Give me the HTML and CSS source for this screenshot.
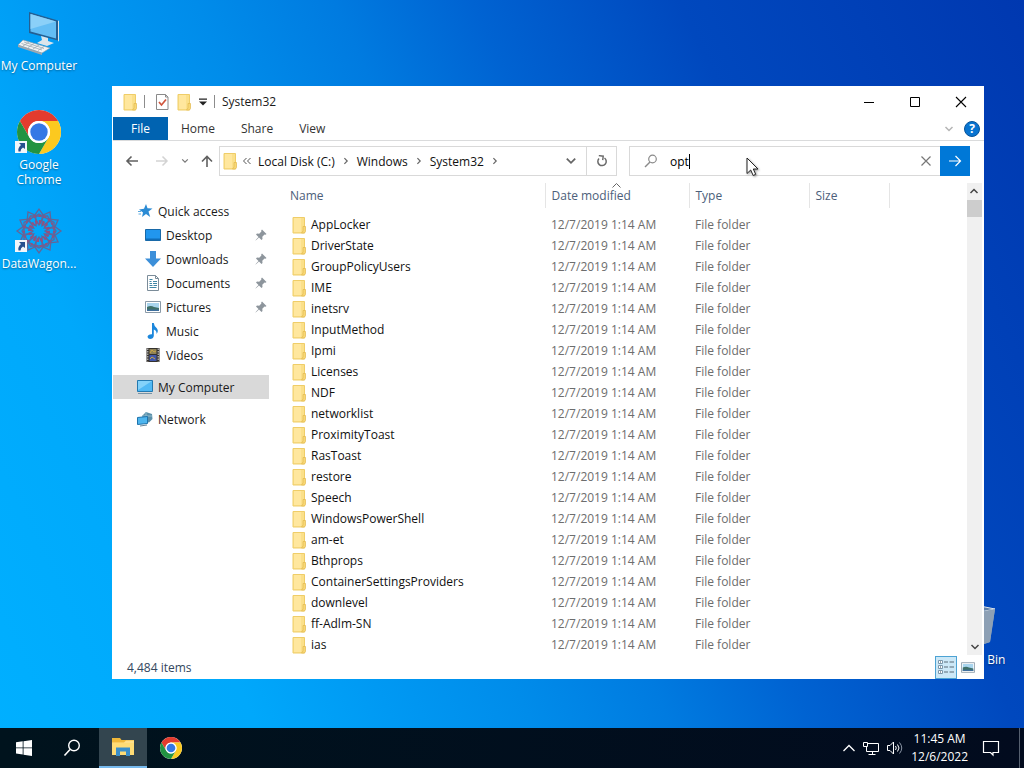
FILE: index.html
```html
<!DOCTYPE html>
<html lang="en">

<head>
    <meta charset="UTF-8">
    <meta name="viewport" content="width=device-width, initial-scale=1">
    <title>System32</title>
    <link rel="stylesheet" href="styles.css">
</head>

<body>
<svg class="sprite" aria-hidden="true">
    <symbol id="folder" viewBox="0 0 14 18">
        <path d="M1 1.500h11.500v15.500H1z" fill="#fbe08a" stroke="#efcd68" />
        <path d="M2 2h7v14H2z" fill="#ffe79e" />
        <path d="M11 10.500h2.500v5l-1 1.500H9.500l1.500-2z" fill="#f8d775" stroke="#e3b94e" stroke-width=".7" />
    </symbol>
    <symbol id="pin" viewBox="0 0 12 12">
        <path d="M7 .5l4.500 4.500-1 .8-1-.2-2.200 2.200.2 2.200-1 1L4 8.500.7 11.500.5 11.300 3.500 8 1 5.500l1-1 2.200.2L6.400 2.500l-.2-1z" fill="#8d959c" />
    </symbol>
    <symbol id="chrome" viewBox="0 0 48 48">
        <circle cx="24" cy="24" r="22" fill="#fff" />
        <path d="M4.950 13A22 22 0 0 1 43.050 13H24A11 11 0 0 0 14.470 29.500z" fill="#e33b2e" />
        <path d="M43.050 13A22 22 0 0 1 24 46L33.530 29.500A11 11 0 0 0 24 13z" fill="#fcc91f" />
        <path d="M24 46A22 22 0 0 1 4.950 13L14.470 29.500A11 11 0 0 0 33.530 29.500z" fill="#229342" />
        <circle cx="24" cy="24" r="11" fill="#fff" />
        <circle cx="24" cy="24" r="8.700" fill="#3578e5" />
    </symbol>
    <symbol id="shortcut" viewBox="0 0 12 12">
        <path d="M0 0h12v12H0z" fill="#f3f6fa" />
        <path d="M4 2h6v6L8 6.500Q5.500 8 5.500 10.500H3.500Q2.500 7 6 4z" fill="#27508f" />
    </symbol>
    <symbol id="picture" viewBox="0 0 16 12">
        <path d="M.5.5h15v11H.5z" fill="#fff" stroke="#8a9aa8" />
        <path d="M2 2h12v8H2z" fill="#a9d5ee" />
        <path d="M2 6q4-2 7 0l5 1v3H2z" fill="#3f7068" />
        <path d="M2 8.500h12V10H2z" fill="#3f6f9d" />
    </symbol>
    <symbol id="chevron" viewBox="0 0 10 10">
        <path d="M1.500 3l3.500 3.500L8.500 3" fill="none" stroke="currentColor" stroke-width="1.500" />
    </symbol>
</svg>

<main class="desktop">
    <nav class="shortcuts" aria-label="Desktop">
        <a class="shortcut" href="#">
            <svg class="shortcut__icon" viewBox="0 0 48 48">
                <path d="M14 3l29 8.500v20L14 24z" fill="#245f92" />
                <path d="M15.500 5L41 12.500v17L15.500 22.500z" fill="#63bdf4" />
                <path d="M15.500 5L41 12.500 15.500 20z" fill="#8bd0f8" />
                <path d="M43 11.500l1 .5v20l-1 .5z" fill="#d6e2ea" />
                <path d="M26 27l7 2v3l6 2-7 3-10-3 5-3z" fill="#dce5eb" />
                <path d="M8 31l27 8-8 5L3 36z" fill="#f1f3f4" stroke="#8f9ba4" stroke-width=".6" />
                <path d="M3 36l24 8v2L3 38z" fill="#9da8b0" />
                <path d="M9 33l20 6.500M6.500 34.500L27 41M14 33l-6 4M19 34.500l-6 4M24 36l-6 4M29 37.500L23 41.500" stroke="#a0abb3" stroke-width=".8" />
            </svg>
            <span>My Computer</span>
        </a>
        <a class="shortcut" href="#">
            <svg class="shortcut__icon" viewBox="0 0 48 48">
                <use href="#chrome" />
                <use href="#shortcut" x="0" y="33" width="12" height="12" />
            </svg>
            <span>Google Chrome</span>
        </a>
        <a class="shortcut" href="#">
            <svg class="shortcut__icon" viewBox="0 0 48 48">
                <g fill="none" stroke="#626699" stroke-width="1.300">
                    <path id="petals" d="M24 18L19 9l5-7 5 7zM24 30l-5 9 5 7 5-7zM18 24l-9-5-7 5 7 5zM30 24l9-5 7 5-7 5z" />
                    <use href="#petals" transform="rotate(30 24 24)" />
                    <use href="#petals" transform="rotate(60 24 24)" />
                    <path d="M24 7l15 8.500v17L24 41 9 32.500v-17z" />
                    <path d="M7 24l8.500-15h17L41 24l-8.500 15h-17z" />
                </g>
                <circle cx="24" cy="24" r="9" fill="none" stroke="#94507f" stroke-width="4" stroke-dasharray="2 1.500" />
                <circle cx="24" cy="24" r="15" fill="none" stroke="#94507f" stroke-width="2" stroke-dasharray="2 3" />
                <use href="#shortcut" x="0" y="33" width="12" height="12" />
            </svg>
            <span>DataWagon...</span>
        </a>
    </nav>
    <a class="shortcut shortcut--bin" href="#">
        <svg class="shortcut__icon" viewBox="0 0 48 48">
            <path d="M5 5l20-3 20 4-5 33-15 5-15-5z" fill="#8fa6bf" />
            <path d="M5 5l20-3 20 4-20 4z" fill="#5d7ea8" stroke="#d9e3ec" />
            <path d="M25 10l20-4-5 33-15 5z" fill="#8da0b5" />
        </svg>
        <span>Recycle Bin</span>
    </a>

    <section class="window">
        <header class="titlebar">
            <svg class="folder"><use href="#folder" /></svg>
            <span class="titlebar__line"></span>
            <button class="plain titlebar__props" aria-label="Properties">
                <svg width="14" height="18" viewBox="0 0 14 18">
                    <path d="M1.500 1.500h9l2.500 2.500v12.500H1.500z" fill="#fff" stroke="#8a8a8a" />
                    <path d="M10.500 1.500V4H13" fill="none" stroke="#8a8a8a" />
                    <path d="M4 9l2.500 3L11 6.500" fill="none" stroke="#d0553d" stroke-width="1.700" />
                </svg>
            </button>
            <button class="plain" aria-label="New folder"><svg class="folder"><use href="#folder" /></svg></button>
            <button class="plain titlebar__more" aria-label="Customize toolbar">
                <svg width="8" height="8" viewBox="0 0 8 8"><path d="M0 .5h8v1.200H0zM0 3.500h8L4 7.500z" fill="#222" /></svg>
            </button>
            <span class="titlebar__line"></span>
            <h1 class="titlebar__text">System32</h1>
            <div class="titlebar__controls">
                <button class="plain" aria-label="Minimize">
                    <svg width="12" height="12" viewBox="0 0 12 12"><path d="M1 6.500h10" stroke="#000" /></svg>
                </button>
                <button class="plain" aria-label="Maximize">
                    <svg width="12" height="12" viewBox="0 0 12 12"><path d="M1.500 1.500h9v9h-9z" fill="none" stroke="#000" /></svg>
                </button>
                <button class="plain" aria-label="Close">
                    <svg width="12" height="12" viewBox="0 0 12 12"><path d="M1 1l10 10M11 1L1 11" stroke="#000" stroke-width="1.100" /></svg>
                </button>
            </div>
        </header>

        <div class="ribbon">
            <button class="ribbon__tab ribbon__tab--file">File</button>
            <button class="ribbon__tab">Home</button>
            <button class="ribbon__tab">Share</button>
            <button class="ribbon__tab">View</button>
            <div class="ribbon__right">
                <button class="plain ribbon__expand" aria-label="Expand ribbon"><svg width="10" height="10"><use href="#chevron" /></svg></button>
                <button class="ribbon__help" aria-label="Help">?</button>
            </div>
        </div>

        <div class="toolbar">
            <div class="history">
                <button class="plain" aria-label="Back">
                    <svg width="14" height="12" viewBox="0 0 14 12"><path d="M13 6H2M6.500 1.500L2 6l4.500 4.500" fill="none" stroke="#606060" stroke-width="1.600" /></svg>
                </button>
                <button class="plain" aria-label="Forward">
                    <svg width="14" height="12" viewBox="0 0 14 12"><path d="M1 6h11M7.500 1.500L12 6l-4.500 4.500" fill="none" stroke="#d3d3d3" stroke-width="1.500" /></svg>
                </button>
                <button class="plain history__recent" aria-label="Recent locations"><svg width="8" height="8"><use href="#chevron" /></svg></button>
                <button class="plain" aria-label="Up">
                    <svg width="12" height="14" viewBox="0 0 12 14"><path d="M6 13V2.500M1 7.500l5-5 5 5" fill="none" stroke="#606060" stroke-width="1.600" /></svg>
                </button>
            </div>
            <div class="address">
                <svg class="folder"><use href="#folder" /></svg>
                <svg class="address__up" width="8" height="8" viewBox="0 0 8 8"><path d="M3.500 1l-3 3 3 3M7.500 1l-3 3 3 3" fill="none" stroke="#555" /></svg>
                <a href="#">Local Disk (C:)</a>
                <svg class="address__sep" width="8" height="8"><use href="#chevron" /></svg>
                <a href="#">Windows</a>
                <svg class="address__sep" width="8" height="8"><use href="#chevron" /></svg>
                <a href="#">System32</a>
                <svg class="address__sep" width="8" height="8"><use href="#chevron" /></svg>
                <button class="plain address__list" aria-label="Previous locations"><svg width="12" height="12"><use href="#chevron" /></svg></button>
                <button class="plain address__refresh" aria-label="Refresh">
                    <svg width="12" height="12" viewBox="0 0 12 12"><path d="M8.500 3A4.200 4.200 0 1 1 3 3.500" fill="none" stroke="#6a6a6a" stroke-width="1.500" /><path d="M2.500 1.200H7v4" fill="none" stroke="#6a6a6a" stroke-width="1.400" transform="rotate(8 7 3)" /></svg>
                </button>
            </div>
            <div class="search">
                <svg class="search__icon" width="14" height="14" viewBox="0 0 14 14"><circle cx="8.500" cy="5" r="3.800" fill="none" stroke="#8a8a8a" stroke-width="1.200" /><path d="M6 8L1 13" stroke="#8a8a8a" stroke-width="1.400" /></svg>
                <input class="search__input" type="text" value="opt" aria-label="Search System32">
                <span class="search__caret"></span>
                <button class="plain search__clear" aria-label="Clear">
                    <svg width="10" height="10" viewBox="0 0 10 10"><path d="M.5.5l9 9M9.500.5l-9 9" stroke="#777" stroke-width="1.200" /></svg>
                </button>
                <button class="plain search__go" aria-label="Search">
                    <svg width="14" height="12" viewBox="0 0 14 12"><path d="M1 6h11.500M7.500 1l5 5-5 5" fill="none" stroke="#fff" stroke-width="1.200" /></svg>
                </button>
            </div>
        </div>

        <div class="content">
            <nav class="places" aria-label="Places">
                <a class="place place--root" href="#">
                    <svg viewBox="0 0 16 16"><path d="M9 1l1.500 4.300 5 .2-4 3 1.700 5.500L9 11l-4 3 1-4.500L2 6.500l5-.8z" fill="#2b8bd4" /><path d="M1 8.500h3M1.500 11h2.500" stroke="#5aa9df" /></svg>
                    Quick access
                </a>
                <a class="place" href="#">
                    <svg viewBox="0 0 16 16"><path d="M.5 2.500h15v11H.5z" fill="#2196ee" stroke="#1869a8" /><path d="M1 11.500h14v1.500H1z" fill="#106db8" /></svg>
                    Desktop
                    <svg class="place__pin"><use href="#pin" /></svg>
                </a>
                <a class="place" href="#">
                    <svg viewBox="0 0 16 16"><path d="M5 0h6v7.500h5L8 16 0 7.500h5z" fill="#3c8fd9" /></svg>
                    Downloads
                    <svg class="place__pin"><use href="#pin" /></svg>
                </a>
                <a class="place" href="#">
                    <svg viewBox="0 0 16 16"><path d="M2.500.5h8l3 3v12h-11z" fill="#fff" stroke="#7b8c99" /><path d="M10.500.5v3h3" fill="none" stroke="#7b8c99" /><path d="M4.500 4.500h3M4.500 6.500h2M8 6.500h4M4.500 8.500h2.500M8 8.500h4M4.500 10.500h3M8.500 10.500h3.500M4.500 12.500h7" stroke="#3f87a6" /></svg>
                    Documents
                    <svg class="place__pin"><use href="#pin" /></svg>
                </a>
                <a class="place" href="#">
                    <svg viewBox="0 0 16 16"><use href="#picture" y="2" width="16" height="12" /></svg>
                    Pictures
                    <svg class="place__pin"><use href="#pin" /></svg>
                </a>
                <a class="place" href="#">
                    <svg viewBox="0 0 16 16"><path d="M7 0h1.800q.2 3 3 5.200Q14 8 11.500 11q.5-3.500-2.700-4.500V13q-.5 3-3.800 3-2.500-.3-2.500-2.300Q3 11 7 11.200z" fill="#1c87dc" /></svg>
                    Music
                </a>
                <a class="place" href="#">
                    <svg viewBox="0 0 16 16"><path d="M1.500 1h13v14h-13z" fill="#34312d" /><path d="M2.800 1.500v13M13.200 1.500v13" stroke="#ddd" stroke-dasharray="1.500 1" /><path d="M4.500 2h7v5h-7z" fill="#8f8256" /><path d="M4.500 8h7v6h-7z" fill="#4157aa" /><path d="M5 6l2-3 2 2 2-1M5 12l2-2 3 2" fill="none" stroke="#c9a644" /></svg>
                    Videos
                </a>
                <a class="place place--root place--gap place--selected" href="#">
                    <svg viewBox="0 0 16 16"><path d="M.5 1.500h15v11H.5z" fill="#50b9f5" stroke="#2379b0" /><path d="M1 2h14L1 11z" fill="#84d2fa" /><path d="M1 14.500h14" stroke="#7793a6" /></svg>
                    My Computer
                </a>
                <a class="place place--root place--gap" href="#">
                    <svg viewBox="0 0 16 16"><path d="M5 5l4-4 6 2 .5 5-3.500 3.500L7 10z" fill="#5c90a9" /><path d="M9 1v8M5 5h10" stroke="#91bdcf" /><path d="M.5 6.500l10-1v7l-10 1z" fill="#4db5ee" stroke="#1e73ac" /><path d="M3 15l7-1" stroke="#63859a" /></svg>
                    Network
                </a>
            </nav>

            <div class="listing">
                <table class="files">
                    <thead>
                        <tr>
                            <th class="files__name">Name</th>
                            <th class="files__date">Date modified<svg class="files__sort" width="9" height="5" viewBox="0 0 9 5"><path d="M.5 4.500l4-4 4 4" fill="none" stroke="#666" /></svg></th>
                            <th class="files__type">Type</th>
                            <th class="files__size">Size</th>
                            <th class="files__rest"></th>
                        </tr>
                    </thead>
                    <tbody>
                        <tr><td><svg class="folder"><use href="#folder" /></svg>AppLocker</td><td>12/7/2019 1:14 AM</td><td>File folder</td><td></td><td></td></tr>
                        <tr><td><svg class="folder"><use href="#folder" /></svg>DriverState</td><td>12/7/2019 1:14 AM</td><td>File folder</td><td></td><td></td></tr>
                        <tr><td><svg class="folder"><use href="#folder" /></svg>GroupPolicyUsers</td><td>12/7/2019 1:14 AM</td><td>File folder</td><td></td><td></td></tr>
                        <tr><td><svg class="folder"><use href="#folder" /></svg>IME</td><td>12/7/2019 1:14 AM</td><td>File folder</td><td></td><td></td></tr>
                        <tr><td><svg class="folder"><use href="#folder" /></svg>inetsrv</td><td>12/7/2019 1:14 AM</td><td>File folder</td><td></td><td></td></tr>
                        <tr><td><svg class="folder"><use href="#folder" /></svg>InputMethod</td><td>12/7/2019 1:14 AM</td><td>File folder</td><td></td><td></td></tr>
                        <tr><td><svg class="folder"><use href="#folder" /></svg>Ipmi</td><td>12/7/2019 1:14 AM</td><td>File folder</td><td></td><td></td></tr>
                        <tr><td><svg class="folder"><use href="#folder" /></svg>Licenses</td><td>12/7/2019 1:14 AM</td><td>File folder</td><td></td><td></td></tr>
                        <tr><td><svg class="folder"><use href="#folder" /></svg>NDF</td><td>12/7/2019 1:14 AM</td><td>File folder</td><td></td><td></td></tr>
                        <tr><td><svg class="folder"><use href="#folder" /></svg>networklist</td><td>12/7/2019 1:14 AM</td><td>File folder</td><td></td><td></td></tr>
                        <tr><td><svg class="folder"><use href="#folder" /></svg>ProximityToast</td><td>12/7/2019 1:14 AM</td><td>File folder</td><td></td><td></td></tr>
                        <tr><td><svg class="folder"><use href="#folder" /></svg>RasToast</td><td>12/7/2019 1:14 AM</td><td>File folder</td><td></td><td></td></tr>
                        <tr><td><svg class="folder"><use href="#folder" /></svg>restore</td><td>12/7/2019 1:14 AM</td><td>File folder</td><td></td><td></td></tr>
                        <tr><td><svg class="folder"><use href="#folder" /></svg>Speech</td><td>12/7/2019 1:14 AM</td><td>File folder</td><td></td><td></td></tr>
                        <tr><td><svg class="folder"><use href="#folder" /></svg>WindowsPowerShell</td><td>12/7/2019 1:14 AM</td><td>File folder</td><td></td><td></td></tr>
                        <tr><td><svg class="folder"><use href="#folder" /></svg>am-et</td><td>12/7/2019 1:14 AM</td><td>File folder</td><td></td><td></td></tr>
                        <tr><td><svg class="folder"><use href="#folder" /></svg>Bthprops</td><td>12/7/2019 1:14 AM</td><td>File folder</td><td></td><td></td></tr>
                        <tr><td><svg class="folder"><use href="#folder" /></svg>ContainerSettingsProviders</td><td>12/7/2019 1:14 AM</td><td>File folder</td><td></td><td></td></tr>
                        <tr><td><svg class="folder"><use href="#folder" /></svg>downlevel</td><td>12/7/2019 1:14 AM</td><td>File folder</td><td></td><td></td></tr>
                        <tr><td><svg class="folder"><use href="#folder" /></svg>ff-Adlm-SN</td><td>12/7/2019 1:14 AM</td><td>File folder</td><td></td><td></td></tr>
                        <tr><td><svg class="folder"><use href="#folder" /></svg>ias</td><td>12/7/2019 1:14 AM</td><td>File folder</td><td></td><td></td></tr>
                    </tbody>
                </table>
            </div>
            <div class="scrollbar">
                <button class="plain scrollbar__up" aria-label="Scroll up"><svg width="10" height="10"><use href="#chevron" /></svg></button>
                <div class="scrollbar__thumb"></div>
                <button class="plain scrollbar__down" aria-label="Scroll down"><svg width="10" height="10"><use href="#chevron" /></svg></button>
            </div>
        </div>

        <footer class="status">
            <span>4,484 items</span>
            <div class="status__views">
                <button class="plain status__view status__view--active" aria-label="Details">
                    <svg width="16" height="14" viewBox="0 0 16 14"><path d="M.5.5h4v3h-4zM.5 5.500h4v3h-4zM.5 10.500h4v3h-4z" fill="#fff" stroke="#7c98ac" /><path d="M2 2h1M2 7h1M2 12h1" stroke="#345" /><path d="M6 2h4M11.500 2H16M6 7h4M11.500 7H16M6 12h4M11.500 12H16" stroke="#5b6b76" /></svg>
                </button>
                <button class="plain status__view" aria-label="Large icons"><svg width="14" height="11"><use href="#picture" /></svg></button>
            </div>
        </footer>
    </section>

    <svg class="pointer" width="14" height="20" viewBox="0 0 14 20">
        <path d="M1 1v15.500l3.700-3.500 2.500 5.500 2.500-1.200L7.300 12H12z" fill="#fff" stroke="#222" />
    </svg>
</main>

<footer class="taskbar">
    <button class="taskbar__button" aria-label="Start">
        <svg width="16" height="16" viewBox="0 0 16 16"><path d="M0 2.300l6.700-1v6.200H0zM7.500 1.200L16 0v7.500H7.500zM0 8.300h6.700v6.300l-6.700-1zM7.500 8.300H16V16l-8.500-1.200z" fill="#fff" /></svg>
    </button>
    <button class="taskbar__button" aria-label="Search">
        <svg width="18" height="18" viewBox="0 0 18 18"><circle cx="11" cy="6.500" r="5.300" fill="none" stroke="#fff" stroke-width="1.400" /><path d="M7 10.500L1.500 16.500" stroke="#fff" stroke-width="1.600" /></svg>
    </button>
    <button class="taskbar__button taskbar__button--active" aria-label="File Explorer">
        <svg width="22" height="18" viewBox="0 0 22 18"><path d="M0 0h8l1.500 2H22v15H0z" fill="#f0b83a" /><path d="M0 4.500h12l2-2h8V15H0z" fill="#ffe08a" /><path d="M0 5h22v12H0z" fill="#ffdc75" /><path d="M4 18V9.500h14V18h-4v-4.500H8V18z" fill="#3a8ec9" /></svg>
    </button>
    <button class="taskbar__button" aria-label="Google Chrome">
        <svg width="24" height="24"><use href="#chrome" /></svg>
    </button>
    <div class="tray">
        <button class="plain" aria-label="Show hidden icons"><svg width="12" height="8" viewBox="0 0 12 8"><path d="M.5 7L6 1.500 11.500 7" fill="none" stroke="#fff" stroke-width="1.300" /></svg></button>
        <button class="plain" aria-label="Network">
            <svg width="16" height="14" viewBox="0 0 16 14"><path d="M5 2.500h10.500v8H3.500V6M.5 1.500h4v4h-4zM9.500 10.500v3M5.500 13.500h7" fill="none" stroke="#fff" /></svg>
        </button>
        <button class="plain" aria-label="Volume">
            <svg width="16" height="14" viewBox="0 0 16 14"><path d="M.5 4.500H3l3.500-3.500v12L3 9.500H.5zM8.500 5q1.500 2 0 4M10.500 3.500q3 3.500 0 7" fill="none" stroke="#fff" /><path d="M12.500 1.500q4.500 5.500 0 11" fill="none" stroke="#8c96a6" /></svg>
        </button>
        <button class="tray__clock">11:45 AM<br>12/6/2022</button>
        <button class="plain" aria-label="Notifications">
            <svg width="18" height="18" viewBox="0 0 18 18"><path d="M1.500 2.500h15v11H11V16l-2.500-2.500h-7z" fill="none" stroke="#fff" stroke-width="1.200" /></svg>
        </button>
        <span class="tray__edge"></span>
    </div>
</footer>
</body>

</html>
```
FILE: styles.css
```css
* {
  box-sizing: border-box;
}

body {
  display: flex;
  flex-direction: column;
  height: 100vh;
  margin: 0;
  overflow: hidden;
  font-family: "Open Sans", "Noto Sans", sans-serif;
  font-size: 12px;
  line-height: 15px;
  color: #1a1a1a;
  background: linear-gradient(65deg, #00b0ff 0%, #00a8fb 20%, #0099f3 30%, #008cea 40%, #007be0 50%, #0063d2 60%, #0048be 75%, #0038b0 100%);
}

button,
input {
  font: inherit;
  color: inherit;
}

a {
  color: inherit;
  text-decoration: none;
}

svg {
  flex: none;
}

.sprite {
  position: absolute;
  width: 0;
  height: 0;
}

.plain {
  display: flex;
  flex: none;
  align-items: center;
  justify-content: center;
  padding: 0;
  border: none;
  background: none;
}

.folder {
  width: 14px;
  height: 18px;
}

/* desktop */

.desktop {
  position: relative;
  flex: 1;
  min-height: 0;
}

.shortcuts {
  width: 78px;
  padding-top: 9px;
}

.shortcut {
  display: flex;
  flex-direction: column;
  gap: 1px;
  align-items: center;
  width: 78px;
  height: 99px;
  color: #fff;
  text-align: center;
  text-shadow: 0 1px 2px rgba(0, 0, 0, .4);
}

.shortcut__icon {
  width: 48px;
  height: 48px;
}

.shortcut--bin {
  position: absolute;
  right: 11px;
  bottom: 26px;
}

.window {
  position: absolute;
  top: 86px;
  right: 40px;
  bottom: 49px;
  left: 112px;
  display: flex;
  flex-direction: column;
  padding-left: 1px;
  background: #fff;
}

.pointer {
  position: absolute;
  top: 157px;
  left: 746px;
  filter: drop-shadow(1px 1px 1px rgba(0, 0, 0, .4));
}

/* title bar and ribbon */

.titlebar {
  display: flex;
  flex: none;
  align-items: center;
  height: 31px;
  padding-left: 10px;
}

.titlebar__line {
  width: 1px;
  height: 13px;
  margin-left: 7px;
  background: #8c8c8c;
}

.titlebar__props {
  margin: 0 8px 0 10px;
}

.titlebar__more {
  margin-left: 8px;
}

.titlebar__text {
  margin: 0 0 0 7px;
  font-size: 12px;
  font-weight: 400;
}

.titlebar__controls {
  display: flex;
  margin-left: auto;
}

.titlebar__controls .plain {
  width: 46px;
  height: 30px;
}

.ribbon {
  display: flex;
  flex: none;
  height: 24px;
  border-bottom: 1px solid #dadbdc;
}

.ribbon__tab {
  padding: 0 13px;
  border: none;
  color: #333;
  background: none;
}

.ribbon__tab--file {
  padding: 0 18px;
  color: #fff;
  background: #0063b1;
}

.ribbon__right {
  display: flex;
  gap: 10px;
  align-items: center;
  margin-left: auto;
  padding-right: 4px;
}

.ribbon__expand {
  color: #b5b5b5;
}

.ribbon__help {
  width: 16px;
  height: 16px;
  padding: 0;
  border: 1px solid #06539a;
  border-radius: 50%;
  font-weight: 700;
  line-height: 14px;
  color: #fff;
  background: #0874d0;
}

/* navigation row */

.toolbar {
  display: flex;
  flex: none;
  gap: 12px;
  height: 40px;
  padding: 5px 14px 5px 0;
}

.history {
  display: flex;
  gap: 16px;
  align-items: center;
  width: 94px;
  padding-left: 12px;
}

.history__recent {
  margin: 0 -4px;
  color: #777;
}

.address {
  display: flex;
  flex: 0 1 398px;
  align-items: center;
  border: 1px solid #d9d9d9;
  white-space: nowrap;
  color: #111;
}

.address .folder {
  margin-left: 3px;
}

.address__up {
  margin: 0 7px 0 6px;
}

.address__sep {
  margin: 0 7px;
  color: #666;
  transform: rotate(-90deg);
}

.address__list {
  width: 30px;
  margin-left: auto;
  color: #666;
}

.address__refresh {
  align-self: stretch;
  width: 30px;
  border-left: 1px solid #d9d9d9;
}

.search {
  display: flex;
  flex: 1;
  align-items: center;
  border: 1px solid #d9d9d9;
}

.search__icon {
  margin: 0 12px 0 14px;
}

.search__input {
  min-width: 0;
  padding: 0;
  border: none;
  outline: none;
  color: #000;
  background: none;
  field-sizing: content;
}

.search__caret {
  width: 1px;
  height: 15px;
  background: #000;
}

.search__clear {
  width: 30px;
  height: 28px;
  margin-left: auto;
}

.search__go {
  align-self: stretch;
  width: 30px;
  margin: -1px;
  background: #0078d7;
}

/* places and file list */

.content {
  display: flex;
  flex: 1;
  min-height: 0;
}

.places {
  flex: none;
  width: 156px;
  padding-top: 18px;
}

.place {
  display: flex;
  gap: 5px;
  align-items: center;
  height: 24px;
  padding-left: 32px;
}

.place svg {
  width: 16px;
  height: 16px;
}

.place--root {
  padding-left: 24px;
}

.place--gap {
  margin-top: 8px;
}

.place--selected {
  background: #d9d9d9;
}

.place .place__pin {
  width: 12px;
  height: 12px;
  margin: 0 2px 0 auto;
}

.listing {
  flex: 1;
  min-width: 0;
  overflow: hidden;
  padding: 2px 0 0 12px;
}

.files {
  width: 100%;
  border-collapse: collapse;
  table-layout: fixed;
}

.files th {
  position: relative;
  height: 25px;
  padding: 0 6px;
  border-right: 1px solid #e5e5e5;
  font-weight: 400;
  text-align: left;
  color: #4c607a;
}

.files .files__name {
  width: 264px;
  padding-left: 9px;
}

.files .files__date {
  width: 144px;
}

.files .files__type {
  width: 120px;
}

.files .files__size {
  width: 80px;
}

.files .files__rest {
  border-right: none;
}

.files__sort {
  position: absolute;
  top: 0;
  left: 50%;
  margin-left: -5px;
}

.files tbody::before {
  display: block;
  height: 6px;
  content: "";
}

.files td {
  height: 21px;
  padding: 0 6px;
  white-space: nowrap;
  color: #6d6d6d;
}

.files td:first-child {
  padding-left: 11px;
  color: #111;
}

.files .folder {
  margin-right: 5px;
  vertical-align: -5px;
}

.scrollbar {
  display: flex;
  flex: none;
  flex-direction: column;
  width: 15px;
  margin: 2px 2px 0 0;
  color: #444;
  background: #f0f0f0;
}

.scrollbar .plain {
  height: 17px;
}

.scrollbar__up {
  transform: rotate(180deg);
}

.scrollbar__thumb {
  height: 17px;
  background: #cdcdcd;
}

.scrollbar__down {
  margin-top: auto;
}

.status {
  display: flex;
  flex: none;
  align-items: center;
  justify-content: space-between;
  height: 24px;
  padding: 0 5px 0 14px;
  color: #33475e;
}

.status__views {
  display: flex;
}

.status__view {
  width: 22px;
  height: 23px;
}

.status__view--active {
  border: 1px solid #4da3d4;
  background: #cce8f7;
}

/* taskbar */

.taskbar {
  display: flex;
  flex: none;
  height: 40px;
  color: #fff;
  background: linear-gradient(90deg, #00131d, #020b1e);
}

.taskbar__button {
  display: flex;
  align-items: center;
  justify-content: center;
  width: 48px;
  padding: 0;
  border: none;
  background: none;
}

.taskbar__button--active {
  margin-left: 3px;
  border-bottom: 2px solid #76b9ed;
  background: #33454f;
}

.tray {
  display: flex;
  gap: 8px;
  align-items: center;
  margin-left: auto;
}

.tray__clock {
  margin-right: 6px;
  padding: 0;
  border: none;
  line-height: 18px;
  background: none;
}

.tray__edge {
  align-self: stretch;
  width: 1px;
  margin: 0 4px 0 11px;
  background: #56606f;
}
```
